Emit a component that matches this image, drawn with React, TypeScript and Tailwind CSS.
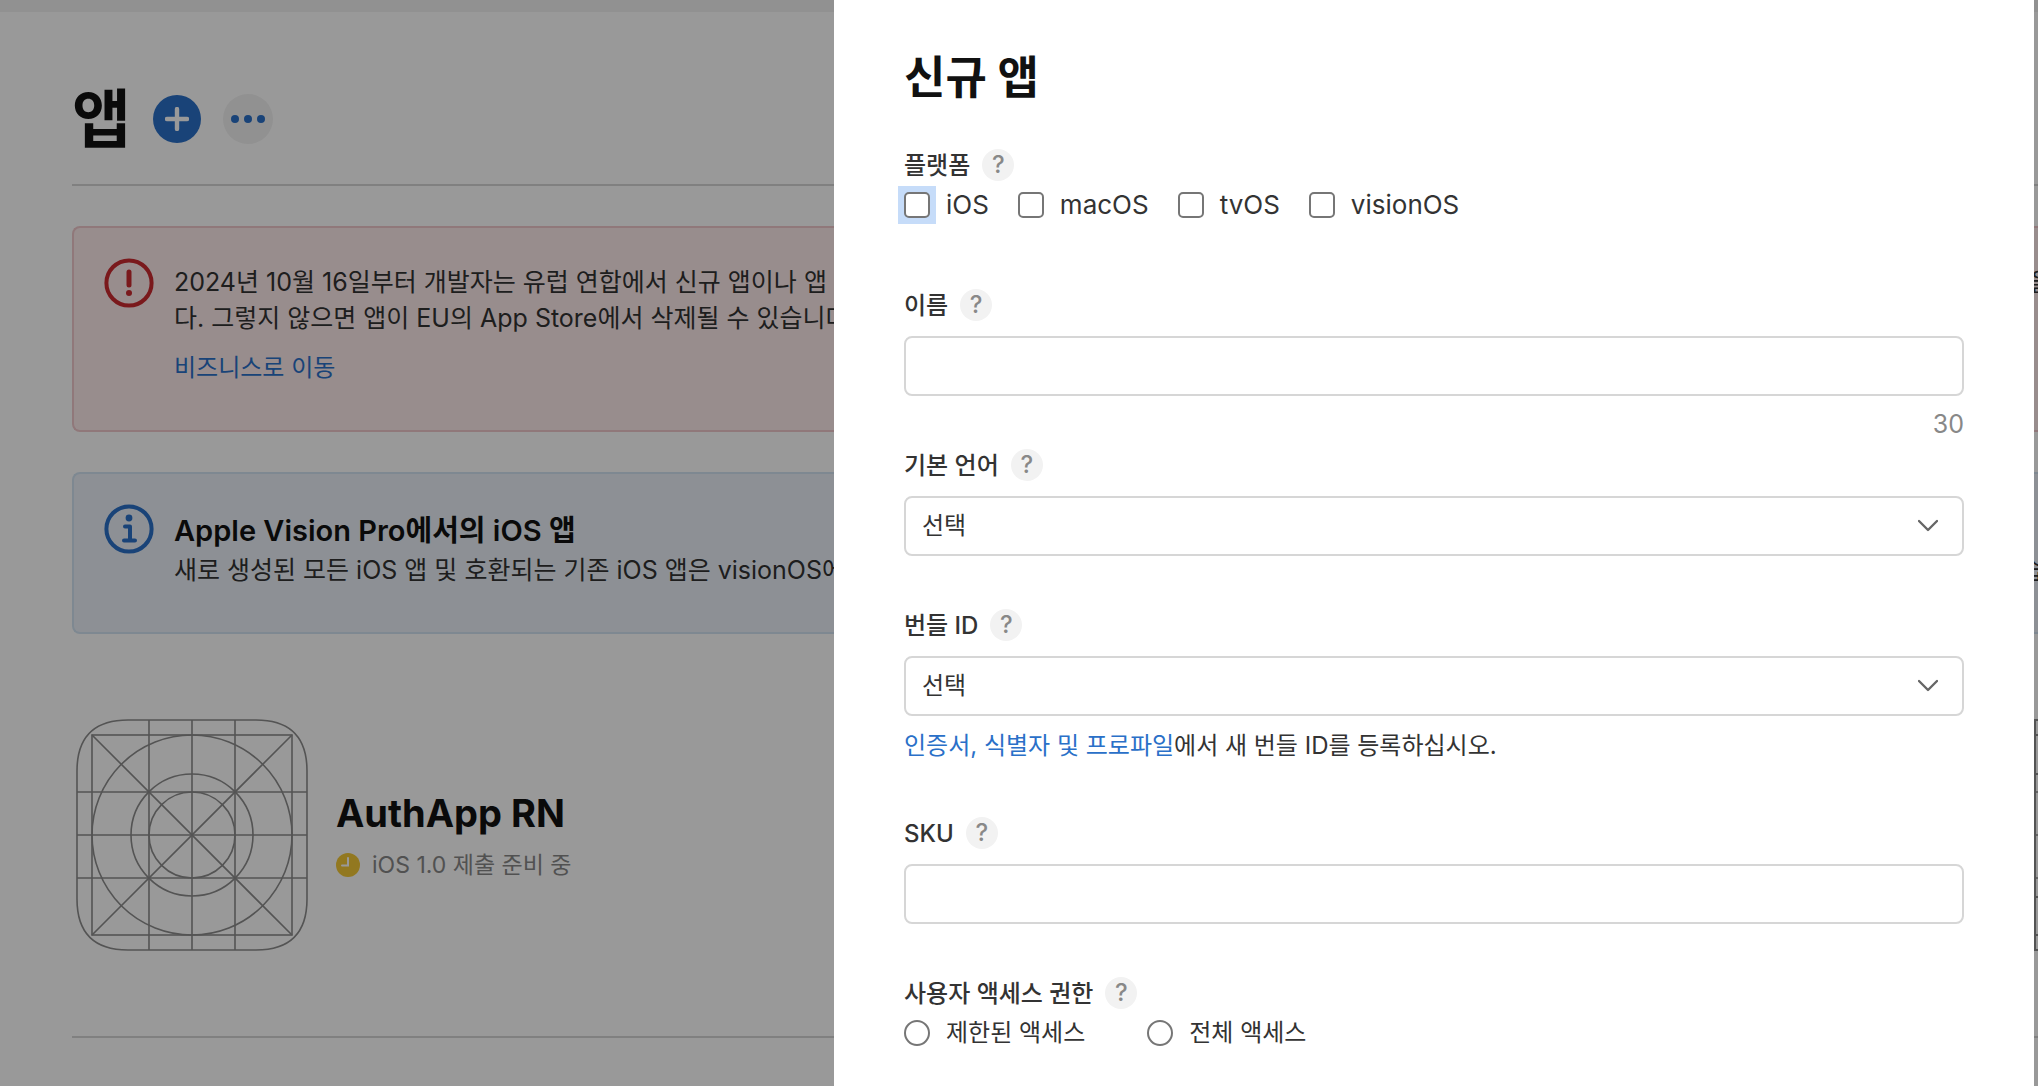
import { useState } from "react";
import type { ReactNode } from "react";

const platforms = ["iOS", "macOS", "tvOS", "visionOS"];
const accessOptions = ["제한된 액세스", "전체 액세스"];

function AppIconGrid({ square = false }: { square?: boolean }) {
  return (
    <svg className="w-[232px] h-[232px] shrink-0" viewBox="0 0 232 232" fill="none" stroke="#8c8c8c" strokeWidth="1.6">
      {square ? (
        <path d="M1 1H231V231H1ZM1 16H231M1 55H231M1 178H231M1 216H231" strokeWidth="2" />
      ) : (
        <path d="M52 1H180C214 1 231 18 231 52V180C231 214 214 231 180 231H52C18 231 1 214 1 180V52C1 18 18 1 52 1Z" />
      )}
      <path d="M73 1V231M116 1V231M159 1V231M1 73H231M1 116H231M1 159H231" />
      <rect x="16" y="16" width="200" height="200" />
      <path d="M16 16L216 216M216 16L16 216" />
      <circle cx="116" cy="116" r="100" />
      <circle cx="116" cy="116" r="61" />
      <circle cx="116" cy="116" r="43" />
    </svg>
  );
}

function HelpButton({ topic }: { topic: string }) {
  return (
    <button
      type="button"
      aria-label={`${topic} 도움말`}
      className="w-8 h-8 shrink-0 rounded-full bg-[#f2f2f2] text-[#888] text-2xl leading-8 font-medium text-center"
    >
      ?
    </button>
  );
}

function Field({ id, label, children }: { id: string; label: string; children: ReactNode }) {
  return (
    <div>
      <div className="flex items-center gap-3 h-8 mb-[15px]">
        <label htmlFor={id} className="pt-0.5 font-medium">{label}</label>
        <HelpButton topic={label} />
      </div>
      {children}
    </div>
  );
}

function SelectBox({ id }: { id: string }) {
  return (
    <div className="relative">
      <select
        id={id}
        className="block w-full h-15 pl-4 pr-14 appearance-none bg-white border-2 border-[#d6d6d6] rounded-lg outline-none"
      >
        <option>선택</option>
      </select>
      <svg className="absolute right-[26px] top-5 w-5 h-5 pointer-events-none" viewBox="0 0 20 20" fill="none" stroke="#666" strokeWidth="2.4" strokeLinecap="round" strokeLinejoin="round">
        <path d="M1 5L10 14L19 5" />
      </svg>
    </div>
  );
}

export default function App() {
  const [name, setName] = useState("");
  const [sku, setSku] = useState("");
  const [access, setAccess] = useState("");

  return (
    <div className="relative h-screen overflow-hidden bg-white font-['Inter','Noto_Sans_CJK_KR',sans-serif] text-2xl leading-9 text-[#333]">
      {/* Apps list */}
      <main className="border-t-12 border-[#f2f2f2] pl-[72px] whitespace-nowrap">
        <header className="flex items-center gap-[22px] h-[174px] pt-[42px] border-b-2 border-[#d6d6d6]">
          <h1 className="text-[64px] leading-[72px] font-bold text-[#111]">앱</h1>
          <button type="button" aria-label="앱 추가" className="w-12 h-12 rounded-full bg-[#2a70c8] flex items-center justify-center">
            <svg className="w-6 h-6" viewBox="0 0 24 24" stroke="#fff" strokeWidth="4.4" strokeLinecap="round">
              <path d="M12 2V22M2 12H22" />
            </svg>
          </button>
          <button type="button" aria-label="더 보기" className="w-[50px] h-[50px] rounded-full bg-[#f2f2f2] flex items-center justify-center">
            <svg className="w-9 h-2" viewBox="0 0 36 8" fill="#2a70c8">
              <circle cx="5" cy="4" r="4" />
              <circle cx="18" cy="4" r="4" />
              <circle cx="31" cy="4" r="4" />
            </svg>
          </button>
        </header>

        <section className="mt-10 h-[206px] flex gap-5 border-2 border-r-0 border-[#f0c8cb] bg-[#fdebec] rounded-l-lg pl-[30px] pt-[30px]">
          <svg className="w-[50px] h-[50px] shrink-0" viewBox="0 0 50 50" fill="none" stroke="#cc2a30">
            <circle cx="25" cy="25" r="22.6" strokeWidth="4" />
            <path d="M25 14V27" strokeWidth="5" strokeLinecap="round" />
            <circle cx="25" cy="35" r="3" fill="#cc2a30" stroke="none" />
          </svg>
          <div className="pt-[6px]">
            <p className="text-[25px] leading-9">
              2024년 10월 16일부터 개발자는 유럽 연합에서 신규 앱이나 앱 업데이트를 제출하려면 거래자 상태를 제공해야 하며, 2025년 2월 17일까지 기존 앱의 거래자 상태를 제공하고 확인을 받아야 합니
              <br />
              다. 그렇지 않으면 앱이 EU의 App Store에서 삭제될 수 있습니다.
            </p>
            <a href="#business" className="block mt-[14px] text-[#2a70c8]">비즈니스로 이동</a>
          </div>
        </section>

        <section className="mt-10 h-[162px] flex gap-5 border-2 border-r-0 border-[#d2e3f2] bg-[#ebf1f9] rounded-l-lg pl-[30px] pt-[30px]">
          <svg className="w-[50px] h-[50px] shrink-0" viewBox="0 0 50 50" fill="none" stroke="#2a70c8">
            <circle cx="25" cy="25" r="22.6" strokeWidth="4" />
            <circle cx="25" cy="14" r="3.4" fill="#2a70c8" stroke="none" />
            <path d="M21 22.5H26V36M20 36.5H31" strokeWidth="4" strokeLinecap="round" strokeLinejoin="round" />
          </svg>
          <div className="pt-[6px]">
            <h2 className="text-[29px] leading-[42px] font-semibold text-[#111]">Apple Vision Pro에서의 iOS 앱</h2>
            <p className="text-[25px] leading-9">
              새로 생성된 모든 iOS 앱 및 호환되는 기존 iOS 앱은 visionOS에서 자동으로 사용할 수 있습니다. 사용 가능 여부는 언제든지 각 앱의 가격 및 사용 가능 여부 섹션에서 변경할 수 있습니다.
            </p>
          </div>
        </section>

        <section className="flex mt-[85px] pl-1 pb-[85px] border-b-2 border-[#d6d6d6]">
          <AppIconGrid />
          <div className="ml-7 pt-[70px]">
            <h3 className="text-[38px] leading-[48px] font-bold text-[#111]">AuthApp RN</h3>
            <p className="flex items-center gap-3 mt-[10px] text-[23px] leading-9 text-[#888]">
              <svg className="w-6 h-6" viewBox="0 0 24 24" fill="none">
                <circle cx="12" cy="12" r="12" fill="#f4c936" />
                <path d="M12 5V12.5H6" stroke="#fff" strokeWidth="2" strokeLinecap="round" />
              </svg>
              iOS 1.0 제출 준비 중
            </p>
          </div>
          <div className="ml-auto -mr-[228px]">
            <AppIconGrid square />
          </div>
        </section>
      </main>

      <div className="absolute inset-0 bg-black/40" />

      {/* New app panel */}
      <div role="dialog" aria-labelledby="dialog-title" className="absolute inset-y-0 right-1 w-[1200px] bg-white px-[70px] pt-12">
        <h2 id="dialog-title" className="text-[45px] leading-[60px] font-bold text-[#111]">신규 앱</h2>

        <form className="mt-[41px]">
          <fieldset>
            <legend className="flex items-center gap-3 h-8 font-medium">
              <span className="pt-0.5">플랫폼</span>
              <HelpButton topic="플랫폼" />
            </legend>
            <div className="flex items-center gap-[29px] h-9 mt-[6px]">
              {platforms.map((platform, i) => (
                <label key={platform} className="flex items-center gap-[10px] -ml-[6px] text-[26px] leading-9">
                  <span className="p-[6px] has-[:focus]:bg-[#c6dcf9]">
                    <input
                      type="checkbox"
                      autoFocus={i === 0}
                      className="block w-[26px] h-[26px] appearance-none bg-white border-2 border-[#767676] rounded-[5px] outline-none checked:bg-[#2a70c8]"
                    />
                  </span>
                  {platform}
                </label>
              ))}
            </div>
          </fieldset>

          <div className="mt-[66px]">
            <Field id="name" label="이름">
              <input
                id="name"
                type="text"
                maxLength={30}
                value={name}
                onChange={(e) => setName(e.target.value)}
                className="block w-full h-15 px-4 border-2 border-[#d6d6d6] rounded-lg outline-none"
              />
            </Field>
            <p className="h-[53px] pt-[10px] text-right text-[25px] leading-9 text-[#888]">{30 - name.length}</p>
          </div>

          <Field id="language" label="기본 언어">
            <SelectBox id="language" />
          </Field>

          <div className="mt-[53px]">
            <Field id="bundle" label="번들 ID">
              <SelectBox id="bundle" />
            </Field>
            <p className="mt-3">
              <a href="#profiles" className="text-[#2a70c8]">인증서, 식별자 및 프로파일</a>
              에서 새 번들 ID를 등록하십시오.
            </p>
          </div>

          <div className="mt-[53px]">
            <Field id="sku" label="SKU">
              <input
                id="sku"
                type="text"
                value={sku}
                onChange={(e) => setSku(e.target.value)}
                className="block w-full h-15 px-4 border-2 border-[#d6d6d6] rounded-lg outline-none"
              />
            </Field>
          </div>

          <fieldset className="mt-[53px]">
            <legend className="flex items-center gap-3 h-8 font-medium">
              <span className="pt-0.5">사용자 액세스 권한</span>
              <HelpButton topic="사용자 액세스 권한" />
            </legend>
            <div className="flex items-center gap-[62px] h-9 mt-[6px]">
              {accessOptions.map((option) => (
                <label key={option} className="flex items-center gap-4">
                  <input
                    type="radio"
                    name="access"
                    checked={access === option}
                    onChange={() => setAccess(option)}
                    className="w-[26px] h-[26px] appearance-none bg-white border-2 border-[#767676] rounded-full checked:border-8"
                  />
                  {option}
                </label>
              ))}
            </div>
          </fieldset>
        </form>
      </div>
    </div>
  );
}
